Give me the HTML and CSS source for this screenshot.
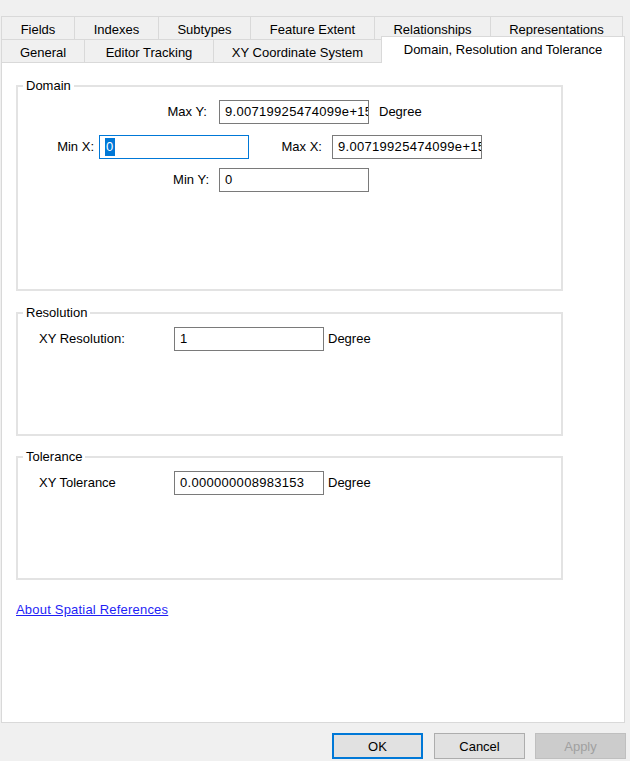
FILE: index.html
```html
<!DOCTYPE html>
<html lang="en">
<head>
    <meta charset="UTF-8">
    <meta name="viewport" content="width=device-width, initial-scale=1.0">
    <title>Feature Class Properties</title>
    <link rel="stylesheet" href="styles.css">
</head>
<body>

<div class="dialog">
  <!-- two rows of tabs, the row holding the active tab sits in front -->
  <div class="tabstrip">
    <div class="tab-row back">
      <div class="tab w-fields">Fields</div>
      <div class="tab w-indexes">Indexes</div>
      <div class="tab w-subtypes">Subtypes</div>
      <div class="tab w-extent">Feature Extent</div>
      <div class="tab w-relations">Relationships</div>
      <div class="tab w-reps">Representations</div>
    </div>
    <div class="tab-row front">
      <div class="tab w-general">General</div>
      <div class="tab w-editor">Editor Tracking</div>
      <div class="tab w-xy">XY Coordinate System</div>
      <div class="tab active">Domain, Resolution and Tolerance</div>
    </div>
  </div>

  <div class="tab-page">
    <fieldset class="group domain">
      <legend>Domain</legend>
      <div class="field-row row-maxy">
        <label class="lbl">Max Y:</label>
        <div class="textbox">9.00719925474099e+15</div>
        <span class="unit">Degree</span>
      </div>
      <div class="field-row row-x">
        <label class="lbl lbl-minx">Min X:</label>
        <div class="textbox focused"><span class="sel">0</span></div>
        <label class="lbl lbl-maxx">Max X:</label>
        <div class="textbox">9.00719925474099e+15</div>
      </div>
      <div class="field-row row-miny">
        <label class="lbl">Min Y:</label>
        <div class="textbox">0</div>
      </div>
    </fieldset>

    <fieldset class="group small">
      <legend>Resolution</legend>
      <div class="field-row">
        <label class="lbl lbl-xy">XY Resolution:</label>
        <div class="textbox">1</div>
        <span class="unit">Degree</span>
      </div>
    </fieldset>

    <fieldset class="group small tolerance">
      <legend>Tolerance</legend>
      <div class="field-row">
        <label class="lbl lbl-xy">XY Tolerance</label>
        <div class="textbox">0.000000008983153</div>
        <span class="unit">Degree</span>
      </div>
    </fieldset>

    <a class="help-link" href="#">About Spatial References</a>
  </div>

  <div class="buttons">
    <button class="btn default">OK</button>
    <button class="btn">Cancel</button>
    <button class="btn" disabled>Apply</button>
  </div>
</div>

</body>
</html>
```

FILE: styles.css
```css
body {
  margin: 0;
  background: #f0f0f0;
  font-family: "Liberation Sans", Arial, sans-serif;
  font-size: 13px;
  color: #000;
}

.dialog {
  padding-top: 16px;
}

/* tabs */
.tabstrip {
  padding-left: 1px;
}

.tab-row {
  display: flex;
  height: 23px;
}

.tab {
  box-sizing: border-box;
  height: 23px;
  padding-top: 2px;
  border-top: 1px solid #d9d9d9;
  border-right: 1px solid #d9d9d9;
  display: flex;
  align-items: center;
  justify-content: center;
  white-space: nowrap;
}

.tab-row .tab:first-child {
  border-left: 1px solid #d9d9d9;
}

.w-fields { width: 74px; }
.w-indexes { width: 84px; }
.w-subtypes { width: 92px; }
.w-extent { width: 124px; }
.w-relations { width: 116px; }
.w-reps { width: 132px; }

.w-general { width: 84px; }
.w-editor { width: 129px; }
.w-xy { width: 168px; }

.tab.active {
  position: relative;
  z-index: 1;
  width: 244px;
  height: 27px;
  margin-top: -3px;
  margin-left: -1px;
  padding-top: 0;
  padding-bottom: 1px;
  background: #fff;
  border-left: 1px solid #d9d9d9;
}

/* page body */
.tab-page {
  box-sizing: border-box;
  margin-left: 1px;
  width: 624px;
  height: 661px;
  padding-top: 15px;
  background: #fff;
  border: 1px solid #d9d9d9;
}

.group {
  box-sizing: border-box;
  width: 547px;
  height: 213px;
  margin: 0 0 0 14px;
  padding: 0;
  border: 2px solid #e3e3e3;
  min-width: 0;
}

.group legend {
  margin-left: 5px;
  padding: 0 3px;
  line-height: 15px;
}

.group.small {
  height: 131px;
  margin-top: 14px;
}

.group.tolerance {
  margin-top: 13px;
}

.field-row {
  display: flex;
  align-items: flex-start;
  margin-top: 7px;
}

.lbl {
  box-sizing: border-box;
  padding-top: 4px;
  line-height: 15px;
  text-align: right;
  white-space: nowrap;
}

.unit {
  padding-top: 4px;
  line-height: 15px;
}

.textbox {
  box-sizing: border-box;
  width: 150px;
  height: 24px;
  padding: 0 5px;
  border: 1px solid #7a7a7a;
  background: #fff;
  line-height: 22px;
  letter-spacing: 0.3px;
  white-space: nowrap;
  overflow: hidden;
}

.textbox.focused {
  border-color: #0078d7;
}

.textbox .sel {
  display: inline-block;
  line-height: 18px;
  padding: 0 1px;
  background: #0078d7;
  color: #fff;
}

/* domain rows */
.row-maxy .lbl { width: 189px; margin-right: 12px; }
.row-maxy .unit { margin-left: 10px; }

.row-x { margin-top: 11px; }
.row-x .lbl-minx { width: 76px; margin-right: 5px; }
.row-x .lbl-maxx { width: 73px; margin-right: 10px; }

.row-miny { margin-top: 9px; }
.row-miny .lbl { width: 191px; margin-right: 10px; }

.row-x .lbl,
.row-maxy .lbl,
.row-miny .lbl {
  padding-top: 0;
  line-height: 24px;
}

.row-maxy .unit {
  padding-top: 0;
  line-height: 24px;
}

.lbl-xy {
  width: 135px;
  margin-left: 21px;
  text-align: left;
}

.small .unit {
  margin-left: 4px;
}

.help-link {
  display: inline-block;
  margin: 22px 0 0 14px;
  line-height: 15px;
  letter-spacing: 0.2px;
  color: #1f1ff5;
  text-decoration: underline;
}

/* dialog buttons */
.buttons {
  display: flex;
  justify-content: flex-end;
  gap: 10px;
  padding: 10px 4px 0 0;
}

.btn {
  box-sizing: border-box;
  width: 91px;
  height: 26px;
  border: 1px solid #adadad;
  background: #e1e1e1;
  font-family: inherit;
  font-size: 13px;
  color: #000;
}

.btn.default {
  border-color: #0078d7;
  box-shadow: inset 0 0 0 1px #0078d7;
  margin-right: 1px;
}

.btn:disabled {
  background: #cccccc;
  border-color: #bfbfbf;
  color: #a0a0a0;
}
```
